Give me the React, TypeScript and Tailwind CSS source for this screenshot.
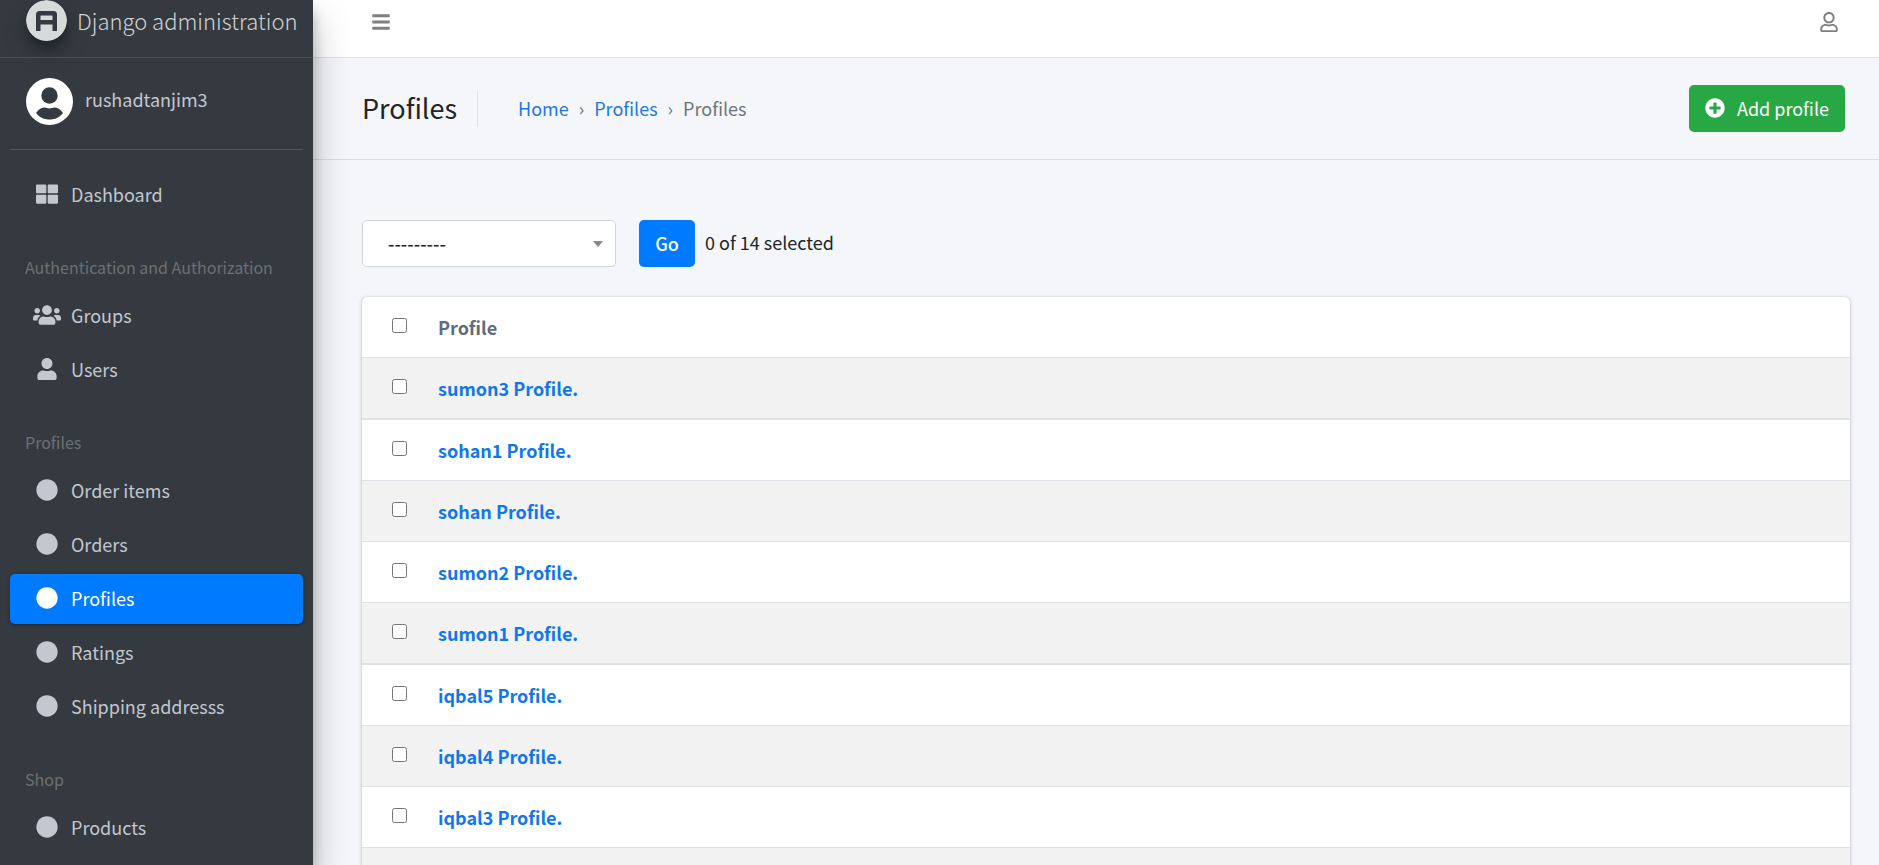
import type { ComponentType } from "react";
import {
  FaBars,
  FaCircle,
  FaPlusCircle,
  FaRegUser,
  FaThLarge,
  FaUser,
  FaUsers,
} from "react-icons/fa";

type NavItem = {
  label: string;
  icon: ComponentType<{ className?: string }>;
  wide?: boolean;
  active?: boolean;
};

const groups: { title?: string; items: NavItem[] }[] = [
  { items: [{ label: "Dashboard", icon: FaThLarge }] },
  {
    title: "Authentication and Authorization",
    items: [
      { label: "Groups", icon: FaUsers, wide: true },
      { label: "Users", icon: FaUser },
    ],
  },
  {
    title: "Profiles",
    items: [
      { label: "Order items", icon: FaCircle },
      { label: "Orders", icon: FaCircle },
      { label: "Profiles", icon: FaCircle, active: true },
      { label: "Ratings", icon: FaCircle },
      { label: "Shipping addresss", icon: FaCircle },
    ],
  },
  { title: "Shop", items: [{ label: "Products", icon: FaCircle }] },
];

const profiles = [
  "sumon3 Profile.",
  "sohan1 Profile.",
  "sohan Profile.",
  "sumon2 Profile.",
  "sumon1 Profile.",
  "iqbal5 Profile.",
  "iqbal4 Profile.",
  "iqbal3 Profile.",
];

function BrandLogo() {
  return (
    <svg
      viewBox="0 0 41 41"
      className="size-[41px] shrink-0 rounded-full shadow-[0_12px_25px_rgba(0,0,0,0.19),0_8px_8px_rgba(0,0,0,0.23)]"
      aria-hidden="true"
    >
      <circle cx="20.5" cy="20.5" r="20.5" fill="#d8d9db" />
      <path
        fillRule="evenodd"
        d="M10 31V14.500Q10 11 13.500 11H27.500Q31 11 31 14.500V31H26.500V24.500H14.500V31ZM14.500 16V20H26.500V16Q26.500 15.500 26 15.500H15Q14.500 15.500 14.500 16Z"
        fill="#343a40"
      />
    </svg>
  );
}

function Avatar() {
  return (
    <svg viewBox="0 0 47 47" className="size-[47px] shrink-0" aria-hidden="true">
      <circle cx="23.5" cy="23.5" r="23.5" fill="#fff" />
      <circle cx="23.5" cy="17.5" r="8.2" fill="#343a40" />
      <path
        d="M10 35C12.500 31 16 29.500 18.500 29.500C20.500 29.500 21.500 30.500 23.500 30.500S26.500 29.500 28.500 29.500C31 29.500 34.500 31 37 35C33.500 39.500 29 41.500 23.500 41.500S13.500 39.500 10 35Z"
        fill="#343a40"
      />
    </svg>
  );
}

function Sidebar() {
  return (
    <aside className="z-10 flex w-[313px] shrink-0 flex-col bg-[#343a40] text-[#c2c7d0] shadow-[0_18px_35px_rgba(0,0,0,0.25),0_12px_12px_rgba(0,0,0,0.22)]">
      <a
        href="#"
        className="flex h-[58px] shrink-0 items-start gap-[10px] border-b border-[#4b545c] pl-[26px]"
      >
        <BrandLogo />
        <span className="text-[22px] leading-10 font-light whitespace-nowrap text-[#d1d3d5]">
          Django administration
        </span>
      </a>
      <div className="px-[10px]">
        <div className="flex h-[92px] items-start gap-3 border-b border-[#4f5962] pt-5 pl-4">
          <Avatar />
          <a href="#" className="text-lg leading-[42px]">
            rushadtanjim3
          </a>
        </div>
        <nav className="pt-5">
          {groups.map((group, index) => (
            <section key={index}>
              {group.title && (
                <h2 className="h-[67px] pt-[31px] pl-[15px] text-base leading-6 whitespace-nowrap text-[#6c7074]">
                  {group.title}
                </h2>
              )}
              {group.items.map(({ label, icon: Icon, wide, active }) => (
                <a
                  key={label}
                  href="#"
                  aria-current={active ? "page" : undefined}
                  className={
                    active
                      ? "mb-1 flex h-[50px] items-center gap-[7px] rounded-[5px] bg-[#007bff] pb-[2px] pl-5 text-white shadow-[0_1px_4px_rgba(0,0,0,0.12),0_1px_3px_rgba(0,0,0,0.24)]"
                      : "mb-1 flex h-[50px] items-center gap-[7px] rounded-[5px] pb-[2px] pl-5"
                  }
                >
                  <span className="flex w-[34px] justify-center">
                    <Icon className={wide ? "size-7" : "size-[22px]"} />
                  </span>
                  <span className="text-lg leading-[30px]">{label}</span>
                </a>
              ))}
            </section>
          ))}
        </nav>
      </div>
    </aside>
  );
}

export default function App() {
  return (
    <div className="flex h-screen overflow-hidden bg-[#f4f6f9] font-['Noto_Sans_CJK_SC','Noto_Sans',sans-serif] text-lg text-[#212529]">
      <Sidebar />
      <div className="flex min-w-0 flex-1 flex-col">
        <header className="flex h-[58px] shrink-0 items-start justify-between border-b border-[#dee2e6] bg-white pr-10 pl-[58px] text-xl leading-none text-[#7f7f7f]">
          <button type="button" aria-label="Toggle sidebar" className="pt-3">
            <FaBars />
          </button>
          <button type="button" aria-label="Account" className="pt-3">
            <FaRegUser />
          </button>
        </header>
        <div className="flex h-[102px] shrink-0 items-center border-b border-[#dbdee2] pr-[34px] pl-[49px]">
          <h1 className="mr-5 pb-[2px] text-[27px] leading-[36px]">Profiles</h1>
          <div className="h-9 border-l border-[#dee2e6]" />
          <nav
            aria-label="Breadcrumb"
            className="ml-10 flex gap-[10px] pb-[2px] leading-[30px] text-[#6c757d]"
          >
            <a href="#" className="text-[#1f78e0]">
              Home
            </a>
            <span>›</span>
            <a href="#" className="text-[#1f78e0]">
              Profiles
            </a>
            <span>›</span>
            <span>Profiles</span>
          </nav>
          <a
            href="#"
            className="ml-auto flex h-[47px] items-center gap-3 rounded-[5px] bg-[#28a745] px-4 pb-[2px] leading-[30px] text-white"
          >
            <FaPlusCircle className="text-xl" />
            Add profile
          </a>
        </div>
        <main className="flex flex-col pt-[60px] pr-[29px] pl-[49px]">
          <form className="mb-[30px] flex items-center" onSubmit={(e) => e.preventDefault()}>
            <div className="grid w-[254px] items-center">
              <select
                aria-label="Action"
                className="col-start-1 row-start-1 h-[47px] appearance-none rounded-[5px] border border-[#ced4da] bg-white pb-[2px] pl-[25px] font-medium text-[#212529]"
              >
                <option>---------</option>
              </select>
              <svg
                viewBox="0 0 10 6"
                className="pointer-events-none col-start-1 row-start-1 mr-[13px] h-[6px] w-[10px] justify-self-end"
                aria-hidden="true"
              >
                <path d="M0 0h10L5 6z" fill="#888" />
              </svg>
            </div>
            <button
              type="submit"
              className="ml-[23px] h-[47px] w-14 rounded-[5px] bg-[#007bff] pb-[2px] leading-[30px] font-medium text-white"
            >
              Go
            </button>
            <span className="ml-[10px] pb-1 leading-[30px]">0 of 14 selected</span>
          </form>
          <div className="overflow-hidden rounded-[5px] bg-white shadow-[0_0_1px_rgba(0,0,0,0.25),0_1px_4px_rgba(0,0,0,0.2)]">
            <table className="w-full text-left leading-[30px]">
              <thead>
                <tr className="h-[60px] text-[#5f6b80]">
                  <th className="w-[76px] pb-1 pl-[30px] leading-none">
                    <input type="checkbox" aria-label="Select all profiles" className="size-[15px]" />
                  </th>
                  <th className="font-bold">Profile</th>
                </tr>
              </thead>
              <tbody>
                {profiles.map((name, index) => (
                  <tr
                    key={name}
                    className={
                      index % 4 === 0
                        ? "h-[62px] border-t border-[#dee2e6] bg-[#f2f2f2]"
                        : index % 4 === 1
                          ? "h-[61px] border-t-2 border-[#dee2e6]"
                          : index % 2 === 0
                            ? "h-[61px] border-t border-[#dee2e6] bg-[#f2f2f2]"
                            : "h-[61px] border-t border-[#dee2e6]"
                    }
                  >
                    <td className="pb-1 pl-[30px] leading-none">
                      <input type="checkbox" aria-label={name} className="size-[15px]" />
                    </td>
                    <th scope="row" className="font-bold">
                      <a href="#" className="text-[#1077ea]">
                        {name}
                      </a>
                    </th>
                  </tr>
                ))}
                <tr className="h-[61px] border-t border-[#dee2e6] bg-[#f2f2f2]">
                  <td colSpan={2} />
                </tr>
              </tbody>
            </table>
          </div>
        </main>
      </div>
    </div>
  );
}
